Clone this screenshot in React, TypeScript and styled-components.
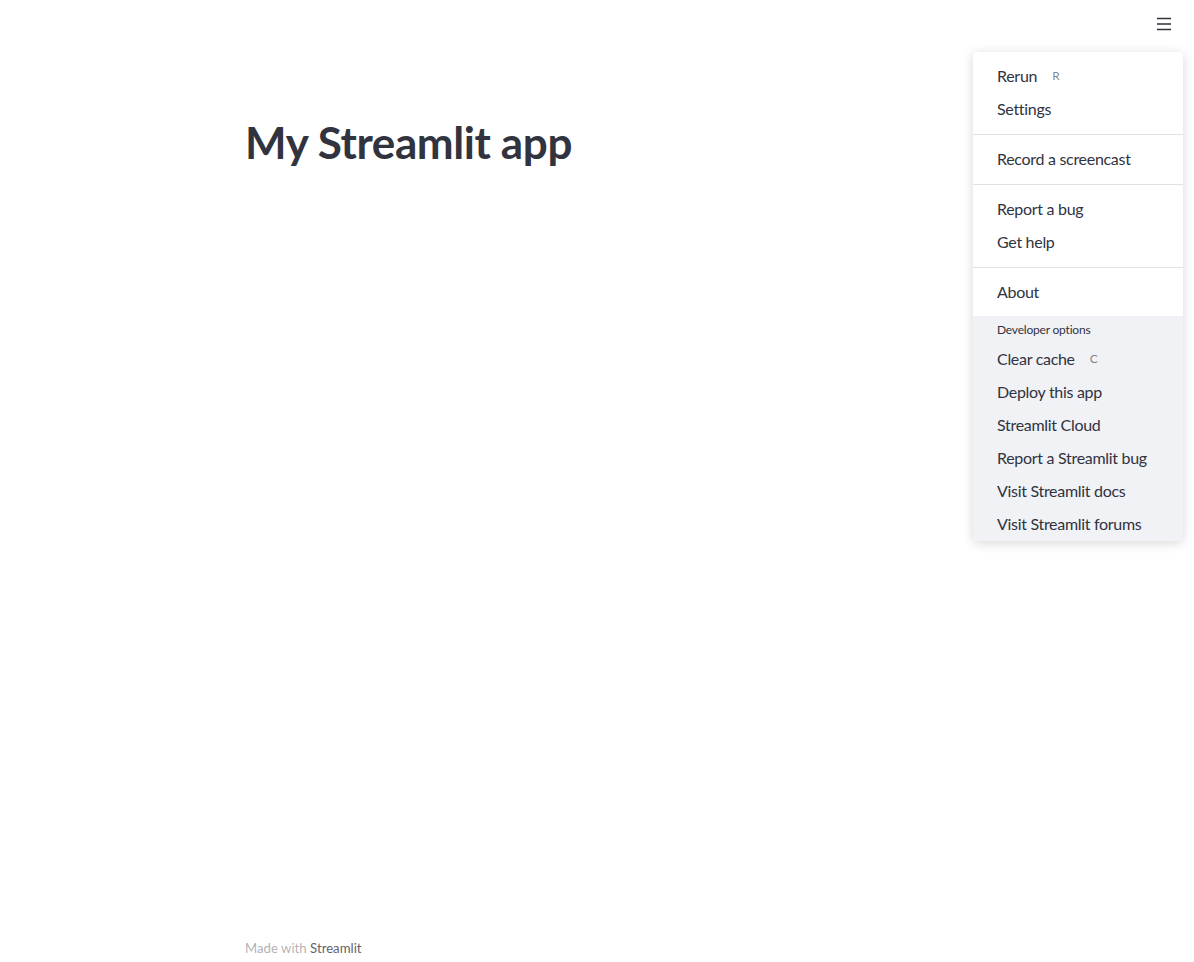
import React from "react";
import styled, { createGlobalStyle } from "styled-components";

const Global = createGlobalStyle`
  html, body { margin: 0; padding: 0; background: #fff; }
  body { font-family: "Source Sans Pro", Lato, "Noto Sans", sans-serif; color: rgb(49, 51, 63); }
  * { box-sizing: border-box; }
`;

const Page = styled.div`
  position: relative;
  width: 100%;
  height: 962px;
  display: flex;
  flex-direction: column;
  overflow: hidden;
`;

const Header = styled.header`
  height: 48px;
  display: flex;
  justify-content: flex-end;
  align-items: center;
  padding-right: 16px;
`;

const MenuButton = styled.button`
  width: 28px;
  height: 28px;
  border: none;
  background: transparent;
  display: flex;
  align-items: center;
  justify-content: center;
  padding: 0;
  margin-top: -1px;
  margin-right: 0px;
  color: rgb(49, 51, 63);
`;

const Main = styled.main`
  flex: 1;
  width: 704px;
  margin: 0 auto;
  display: flex;
  flex-direction: column;
`;

const Title = styled.h1`
  margin: 68px 0 0;
  font-size: 44px;
  font-weight: 700;
  line-height: 52px;
  letter-spacing: -0.4px;
  color: rgb(49, 51, 63);
`;

const Spacer = styled.div`
  flex: 1;
`;

const Footer = styled.footer`
  font-size: 13.2px;
  line-height: 20px;
  padding-bottom: 4px;
  color: rgba(49, 51, 63, 0.4);
`;

const FooterLink = styled.span`
  color: rgba(49, 51, 63, 0.8);
`;

const Menu = styled.div`
  position: absolute;
  top: 52px;
  right: 11px;
  width: 210px;
  background: #fff;
  border-radius: 4px;
  box-shadow: rgba(0, 0, 0, 0.16) 0px 2px 12px;
  overflow: hidden;
`;

const Section = styled.div<{ $dev?: boolean }>`
  display: flex;
  flex-direction: column;
  padding: ${(p) => (p.$dev ? "0" : "8px 0")};
  background: ${(p) => (p.$dev ? "#f0f2f6" : "#fff")};
  border-bottom: ${(p) => (p.$dev ? "none" : "1px solid rgba(49, 51, 63, 0.15)")};
  &:nth-last-child(2) {
    border-bottom: 1px solid rgba(49, 51, 63, 0.08);
    padding-bottom: 7px;
  }
`;

const SectionLabel = styled.div`
  font-size: 12px;
  line-height: 16px;
  padding: 5px 24px 5px;
  color: rgb(49, 51, 63);
  letter-spacing: -0.2px;
`;

const Item = styled.div`
  height: 33px;
  padding: 0 24px 2px;
  display: flex;
  align-items: center;
  font-size: 16px;
  letter-spacing: -0.3px;
  color: rgb(49, 51, 63);
`;

const Shortcut = styled.span`
  margin-left: 15px;
  font-size: 12px;
  color: rgba(49, 51, 63, 0.6);
`;

type Entry = { label: string; key?: string };

const sections: Entry[][] = [
  [{ label: "Rerun", key: "R" }, { label: "Settings" }],
  [{ label: "Record a screencast" }],
  [{ label: "Report a bug" }, { label: "Get help" }],
  [{ label: "About" }],
];

const devItems: Entry[] = [
  { label: "Clear cache", key: "C" },
  { label: "Deploy this app" },
  { label: "Streamlit Cloud" },
  { label: "Report a Streamlit bug" },
  { label: "Visit Streamlit docs" },
  { label: "Visit Streamlit forums" },
];

const MenuItem = ({ e }: { e: Entry }) => (
  <Item>
    {e.label}
    {e.key && <Shortcut>{e.key}</Shortcut>}
  </Item>
);

export default function App() {
  return (
    <Page>
      <Global />
      <Header>
        <MenuButton aria-label="menu">
          <svg width="16" height="16" viewBox="0 0 16 16" fill="none">
            <path d="M1 2.5h14M1 8h14M1 13.5h14" stroke="currentColor" strokeWidth="1.6" />
          </svg>
        </MenuButton>
      </Header>
      <Main>
        <Title>My Streamlit app</Title>
        <Spacer />
        <Footer>
          Made with <FooterLink>Streamlit</FooterLink>
        </Footer>
      </Main>
      <Menu>
        {sections.map((s, i) => (
          <Section key={i}>
            {s.map((e) => (
              <MenuItem key={e.label} e={e} />
            ))}
          </Section>
        ))}
        <Section $dev>
          <SectionLabel>Developer options</SectionLabel>
          {devItems.map((e) => (
            <MenuItem key={e.label} e={e} />
          ))}
        </Section>
      </Menu>
    </Page>
  );
}
